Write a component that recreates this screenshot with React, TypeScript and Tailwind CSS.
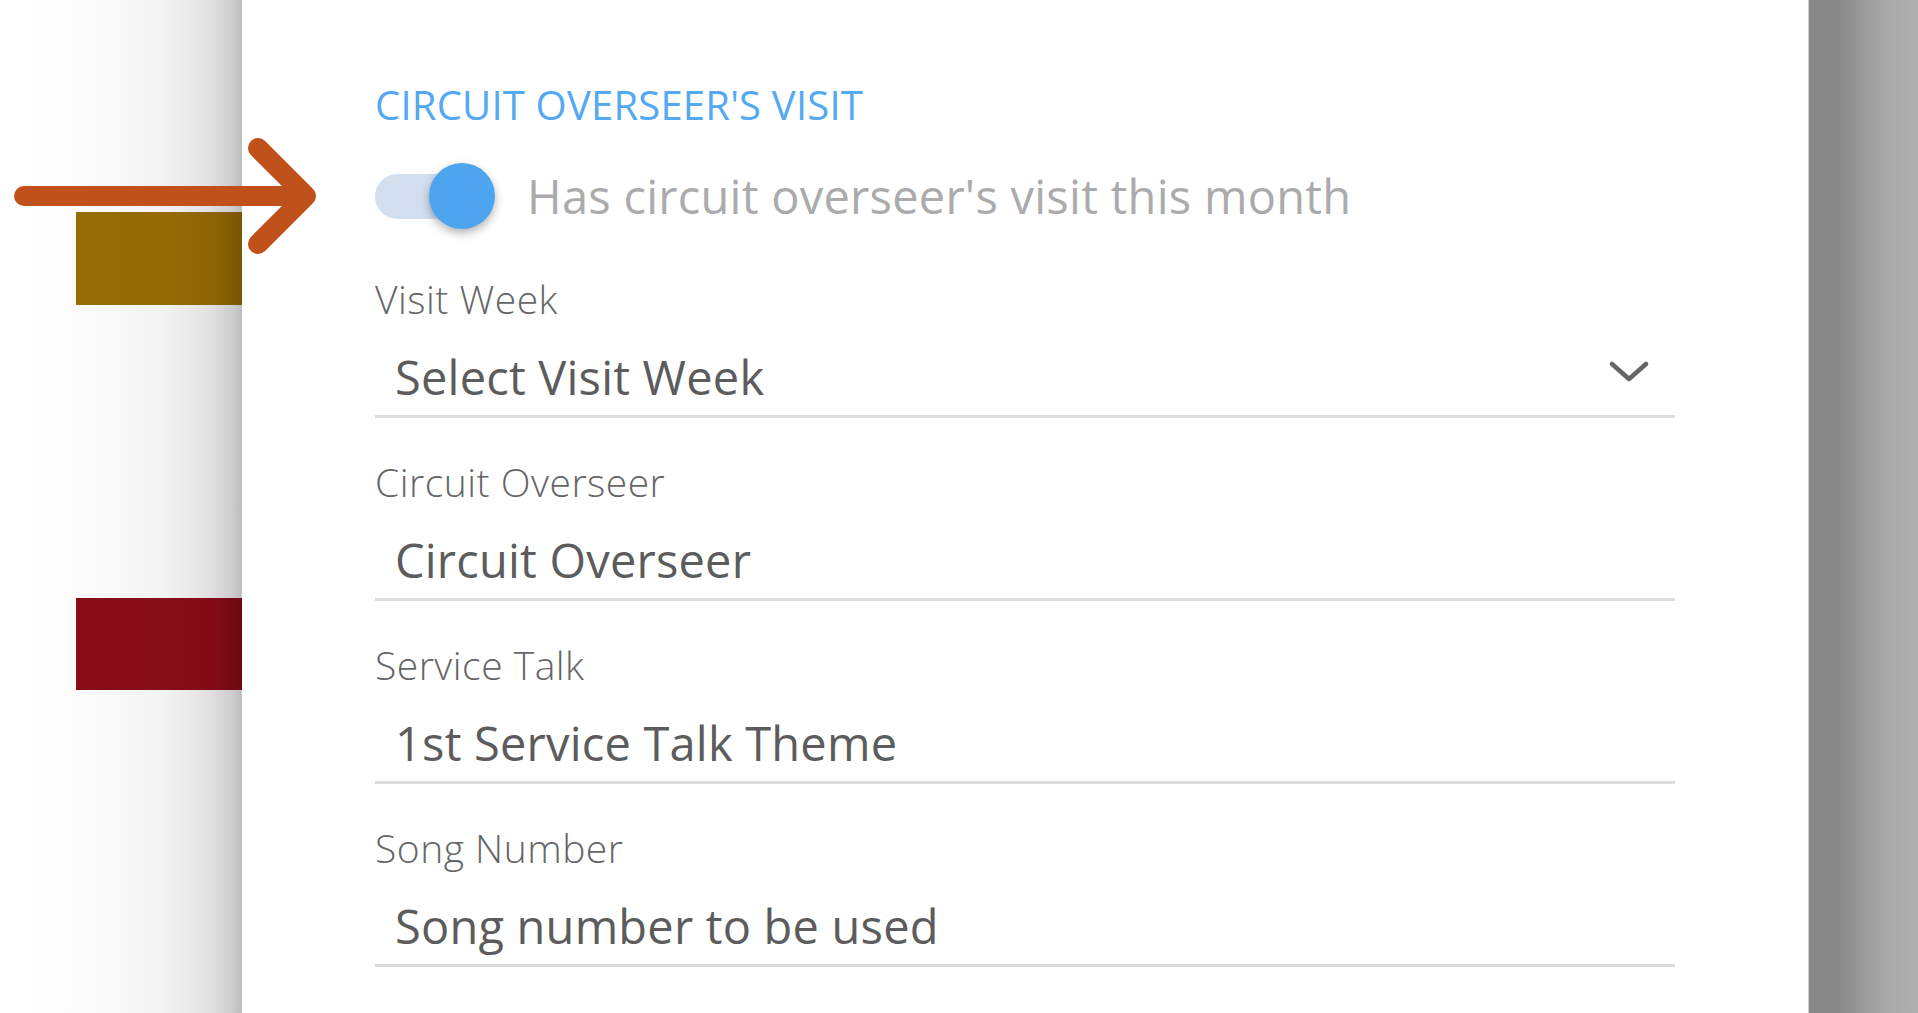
const fields = [
  { label: "Visit Week", value: "Select Visit Week", select: true },
  { label: "Circuit Overseer", value: "Circuit Overseer" },
  { label: "Service Talk", value: "1st Service Talk Theme" },
  { label: "Song Number", value: "Song number to be used" },
];

const ChevronDown = () => (
  <svg width="40" height="22" viewBox="0 0 40 22" className="mt-[12px] mr-[26px] shrink-0">
    <path
      d="M3 3 L20 18 L37 3"
      fill="none"
      stroke="#666666"
      strokeWidth="4.5"
      strokeLinecap="round"
      strokeLinejoin="round"
    />
  </svg>
);

const Field = ({ label, value, select }: { label: string; value: string; select?: boolean }) => (
  <div className="flex flex-col">
    <div className="text-[39px] leading-[44px] font-light tracking-[0.5px] text-[#666666]">{label}</div>
    <div className="mt-[28px] flex items-start justify-between border-b-[3px] border-[#dcdcdc] pb-[10px]">
      <div className="pl-[20px] text-[47px] leading-[56px] tracking-[0.2px] text-[#5c5c5c]">{value}</div>
      {select && <ChevronDown />}
    </div>
  </div>
);

const Toggle = () => (
  <div className="relative flex h-[66px] w-[122px] shrink-0 items-center">
    <div className="h-[45px] w-[112px] rounded-full bg-[#d3deef]" />
    <div className="absolute left-[54px] top-0 size-[66px] rounded-full bg-[#4ea5ef] shadow-[0_4px_10px_rgba(0,0,0,0.3)]" />
  </div>
);

const App = () => {
  return (
    <div
      className="relative flex h-[1013px] w-full overflow-hidden bg-white"
      style={{ fontFamily: '"Open Sans", "Liberation Sans", sans-serif' }}
    >
      {/* left strip behind the panel */}
      <div className="flex w-[242px] shrink-0 flex-col bg-[linear-gradient(to_right,#ffffff_0%,#fcfcfc_35%,#f3f3f3_68%,#e2e2e2_86%,#cdcdcd_96%,#bdbdbd_100%)] pl-[76px] pt-[212px]">
        <div className="h-[93px] bg-[linear-gradient(to_right,#976c04_0%,#946a05_60%,#8a6305_85%,#7a5503_100%)]" />
        <div className="mt-[293px] h-[92px] bg-[linear-gradient(to_right,#8a0d17_0%,#870d16_60%,#800c15_85%,#6d0910_100%)]" />
      </div>

      {/* form panel */}
      <div className="flex flex-1 flex-col bg-white px-[133px] pt-[81px]">
        <h2 className="text-[40px] leading-[48px] tracking-[0.2px] text-[#55a8f2]">CIRCUIT OVERSEER'S VISIT</h2>

        <div className="mt-[34px] flex items-center gap-[30px]">
          <Toggle />
          <span className="text-[47px] leading-[56px] tracking-[0.25px] text-[#ababab]">
            Has circuit overseer's visit this month
          </span>
        </div>

        <div className="mt-[48px] flex flex-col gap-[42px]">
          {fields.map((f) => (
            <Field key={f.label} label={f.label} value={f.value} select={f.select} />
          ))}
        </div>
      </div>

      {/* dimmed backdrop on the right */}
      <div className="w-[110px] shrink-0 border-l border-[#cfcfcf] bg-[linear-gradient(to_right,#888888_0%,#888888_28%,#9c9c9c_50%,#aaaaaa_75%,#b0b0b0_100%)]" />

      {/* annotation arrow */}
      <svg className="pointer-events-none absolute left-0 top-0" width="340" height="270" viewBox="0 0 340 270">
        <path
          d="M24 196 L306 196 M258 148 L306 196 L258 244"
          fill="none"
          stroke="#c1511a"
          strokeWidth="20"
          strokeLinecap="round"
          strokeLinejoin="round"
        />
      </svg>
    </div>
  );
};

export default App;
